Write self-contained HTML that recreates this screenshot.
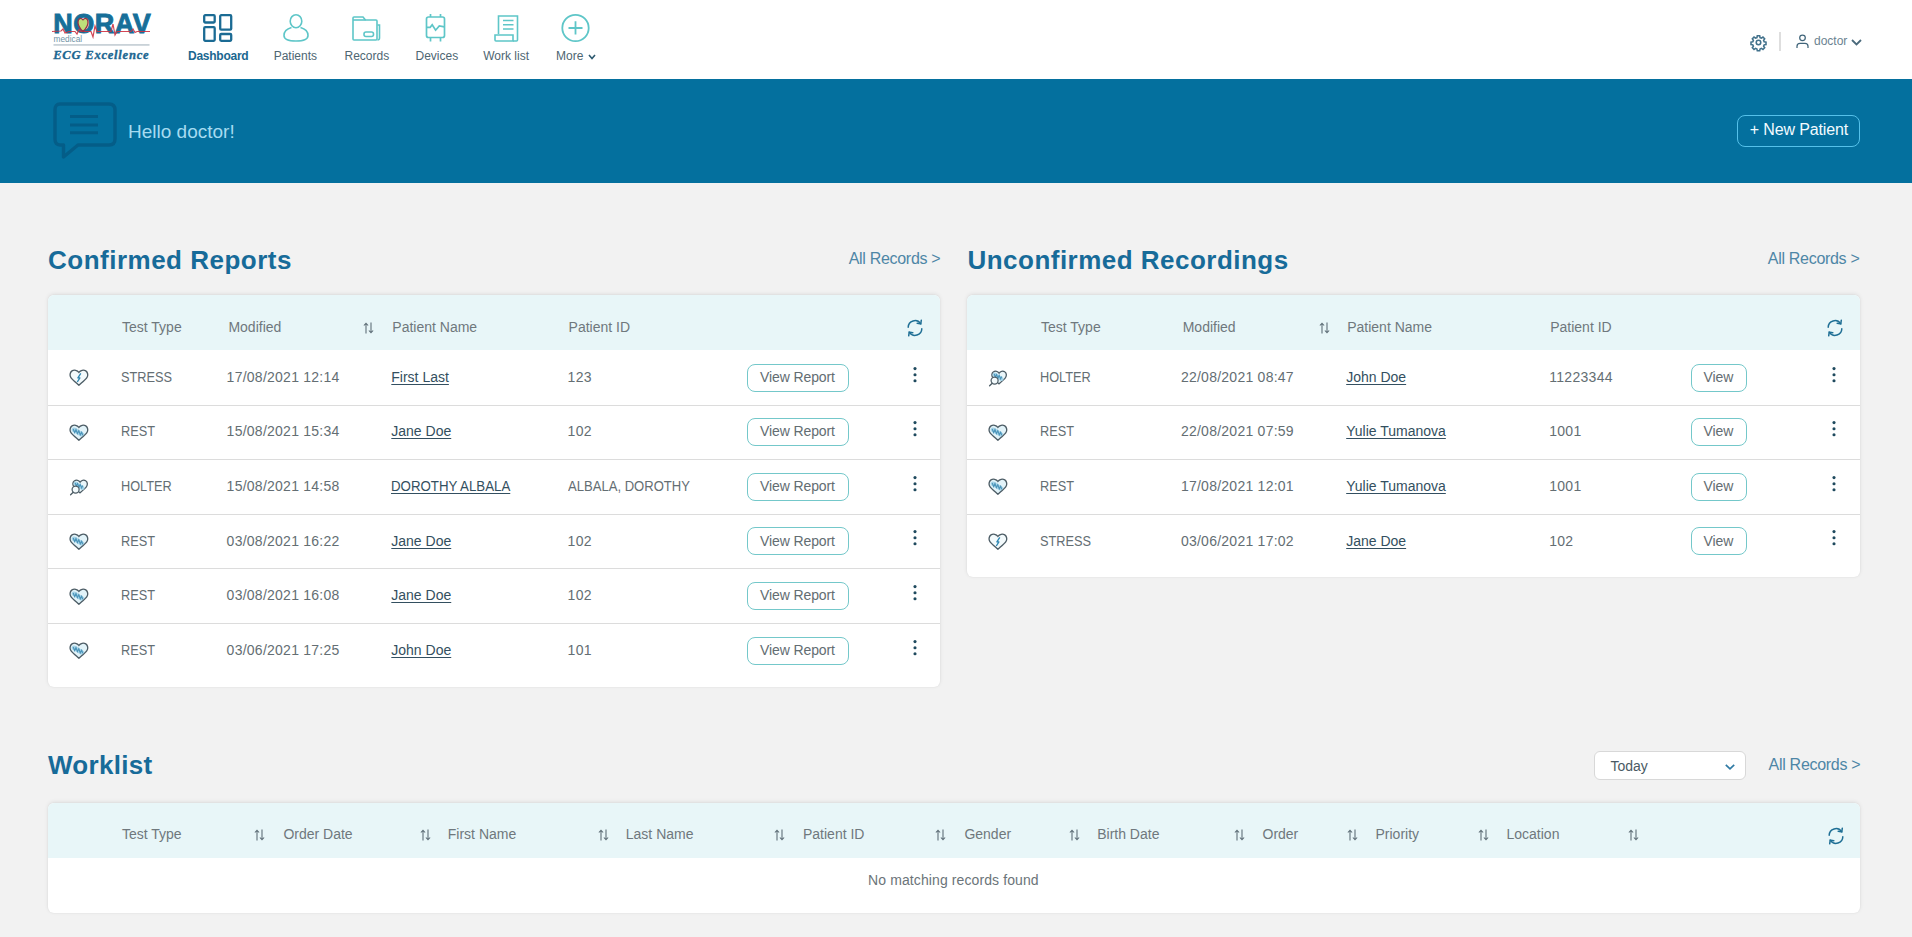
<!DOCTYPE html><html><head><meta charset="utf-8"><title>Dashboard</title><style>
*{margin:0;padding:0;box-sizing:border-box}
html,body{width:1912px;height:937px;overflow:hidden;background:#f2f2f2;font-family:'Liberation Sans',sans-serif}
.t{position:absolute;line-height:1;white-space:nowrap}
.a{position:absolute}
svg{position:absolute;overflow:visible}
.card{position:absolute;background:#fff;border-radius:6px;box-shadow:0 -1px 4px rgba(0,0,0,0.09),0 0 2px rgba(0,0,0,0.06);overflow:hidden}
.thead{position:absolute;left:0;top:0;right:0;height:55px;background:#e8f6f8}
.rowb{position:absolute;left:0;right:0;height:1px;background:#dcdcdc}
.btn{position:absolute;border:1px solid #74c8ca;border-radius:8px;height:28px;background:#fff}
.lnk{text-decoration:underline;text-underline-offset:2px}
</style></head><body>
<svg width="0" height="0" style="position:absolute;left:0;top:0"><defs><clipPath id="hc"><path d="M9.9 15.2 C7.5 13 4.2 10.3 2.8 8.3 C1.6 6.5 1.8 3.9 3.6 2.7 C5.5 1.5 8.3 2.2 9.9 4.4 C11.5 2.2 14.3 1.5 16.2 2.7 C18 3.9 18.2 6.5 17 8.3 C15.6 10.3 12.3 13 9.9 15.2 Z"/></clipPath></defs></svg>
<div class="a" style="left:0;top:0;width:1912px;height:79px;background:#fff"></div>
<div class="a" style="left:0;top:79px;width:1912px;height:104px;background:#04709e"></div>
<svg style="left:52px;top:10px" width="102" height="54" viewBox="0 0 102 54">
<text x="1.2" y="23.4" font-family="Liberation Sans" font-weight="bold" font-size="27" fill="#176f99" stroke="#176f99" stroke-width="0.9" letter-spacing="0.5">NORAV</text>
<polyline points="0,21.5 9,21 11,19 13,23 17,21.5 23,21.5 25,24 27,19.5 29,21.5 39,21.5 41,27 43,16 45,21.5 59,21.5 61,14 63,25 65,21.5 79,21.5 81,19 83,22.5 85,21.5 98,21.5" fill="none" stroke="#cc3344" stroke-width="1.2" opacity="0.9"/>
<path d="M31 21.5 C28.3 19 25.8 16 26 12 C26.2 8.5 28.6 7.3 31 9.8 C33.4 7.3 35.8 8.5 36 12 C36.2 16 33.7 19 31 21.5Z" fill="#bde07a" stroke="#9a3046" stroke-width="1.3"/>
<text x="1.5" y="32" font-family="Liberation Sans" font-size="8.3" fill="#6f93a6">medical</text>
<rect x="1.5" y="34" width="96" height="1.8" fill="#c9d2d8"/>
<text x="1.2" y="48.7" font-family="Liberation Serif" font-style="italic" font-weight="bold" font-size="12.6" fill="#1d6791" stroke="#1d6791" stroke-width="0.35" letter-spacing="0.75">ECG Excellence</text>
</svg>
<svg style="left:203px;top:14px" width="30" height="28" viewBox="0 0 30 28"><g fill="none" stroke="#1b6b94" stroke-width="2.3">
<rect x="1.2" y="1.2" width="10.5" height="7.3" rx="1"/><rect x="17.2" y="1.2" width="11" height="14.5" rx="1"/>
<rect x="1.2" y="13.2" width="10.5" height="13.6" rx="1"/><rect x="17.2" y="20" width="11" height="6.8" rx="1"/></g></svg>
<div class="t " style="left:188px;top:49.60px;font-size:12px;color:#1b6790;font-weight:bold;letter-spacing:-0.25px">Dashboard</div>
<svg style="left:283px;top:14px" width="26" height="28" viewBox="0 0 26 28"><g fill="none" stroke="#5ec6c8" stroke-width="1.6">
<ellipse cx="13" cy="7.2" rx="5.8" ry="6.5"/><path d="M8.5 13.5 C3 15 1 18 1 21.5 C1 25.5 6 27 13 27 C20 27 25 25.5 25 21.5 C25 18 23 15 17.5 13.5"/></g></svg>
<div class="t " style="left:273.7px;top:49.60px;font-size:12px;color:#4e6672;font-weight:normal;">Patients</div>
<svg style="left:352px;top:16px" width="29" height="25" viewBox="0 0 29 25"><g fill="none" stroke="#5ec6c8" stroke-width="1.6">
<path d="M1 23 V2 Q1 1 2 1 H11 L13.5 4 H24 Q25 4 25 5 V23 Q25 24 24 24 H2 Q1 24 1 23Z"/><path d="M1 4 H13.5"/><path d="M25.5 9 H27.5 V22 Q27.5 24 25.5 24"/>
<rect x="12" y="16" width="9.5" height="4.5" rx="2"/></g></svg>
<div class="t " style="left:344.5px;top:49.60px;font-size:12px;color:#4e6672;font-weight:normal;">Records</div>
<svg style="left:425px;top:14px" width="21" height="28" viewBox="0 0 21 28"><g fill="none" stroke="#5ec6c8" stroke-width="1.7">
<rect x="1.5" y="3" width="18" height="20.5" rx="2"/><path d="M5.5 0 V3 M15.5 0 V3 M5.5 23.5 V27.5 M15.5 23.5 V27.5"/>
<path d="M1.5 13.3 L5.2 13.3 L7.2 10.8 L10.6 16.2 L14.3 12 L19.5 12.8"/></g></svg>
<div class="t " style="left:415.5px;top:49.60px;font-size:12px;color:#4e6672;font-weight:normal;">Devices</div>
<svg style="left:494px;top:15px" width="26" height="27" viewBox="0 0 26 27"><g fill="none" stroke="#5ec6c8" stroke-width="1.6">
<path d="M4.5 19 V1 H23.5 V25"/><path d="M9 5.5 H19.5 M9 9.8 H19.5 M9 14 H19.5" stroke-width="1.4"/>
<path d="M1 20 H19 V26 H2 Q1 26 1 25Z"/><path d="M19 26 H22.5 Q23.5 26 23.5 25"/></g></svg>
<div class="t " style="left:483.2px;top:49.60px;font-size:12px;color:#4e6672;font-weight:normal;">Work list</div>
<svg style="left:561px;top:14px" width="30" height="28" viewBox="0 0 30 28"><g fill="none" stroke="#5ec6c8" stroke-width="1.8">
<circle cx="14.5" cy="14" r="13.2"/><path d="M14.5 7.2 V20.6 M7.5 14 H21.5"/></g></svg>
<div class="t " style="left:556px;top:49.60px;font-size:12px;color:#4e6672;font-weight:normal;">More</div>
<svg style="left:588px;top:54px" width="8" height="6" viewBox="0 0 8 6"><path d="M1 1 L4 4.5 L7 1" fill="none" stroke="#2e5a70" stroke-width="1.6"/></svg>
<svg style="left:1749.5px;top:33.5px" width="17" height="17" viewBox="0 0 24 24"><g fill="none" stroke="#41718b" stroke-width="2.2">
<circle cx="12" cy="12" r="3.2"/>
<path d="M10.3 2.5h3.4l.5 2.6 1.9.8 2.2-1.5 2.4 2.4-1.5 2.2.8 1.9 2.6.5v3.4l-2.6.5-.8 1.9 1.5 2.2-2.4 2.4-2.2-1.5-1.9.8-.5 2.6h-3.4l-.5-2.6-1.9-.8-2.2 1.5-2.4-2.4 1.5-2.2-.8-1.9-2.6-.5v-3.4l2.6-.5.8-1.9-1.5-2.2 2.4-2.4 2.2 1.5 1.9-.8z"/></g></svg>
<div class="a" style="left:1779px;top:32px;width:2px;height:19px;background:#dedede"></div>
<svg style="left:1795.5px;top:34px" width="14" height="14" viewBox="0 0 14 14"><g fill="none" stroke="#41657a" stroke-width="1.25">
<circle cx="6.5" cy="3.8" r="2.8"/><path d="M1 14 V12.2 Q1 9.3 4 9.3 H9 Q12 9.3 12 12.2 V14"/></g></svg>
<div class="t " style="left:1814px;top:35.20px;font-size:12px;color:#6b8391;font-weight:normal;">doctor</div>
<svg style="left:1851px;top:39px" width="11" height="7" viewBox="0 0 11 7"><path d="M1 1 L5.5 5.5 L10 1" fill="none" stroke="#4b6a7c" stroke-width="1.8"/></svg>
<svg style="left:53px;top:102px" width="64" height="58" viewBox="0 0 64 58"><g fill="none" stroke="#045d88" stroke-width="3.4" stroke-linejoin="round">
<path d="M7 2 H56 Q62 2 62 8 V37 Q62 43 56 43 H25 L10.5 55 L10.5 43 H7 Q2 43 2 37 V8 Q2 2 7 2Z"/>
<path d="M17 14.6 H45 M17 22.9 H45 M17 30.7 H45" stroke-width="3"/></g></svg>
<div class="t " style="left:128px;top:121.65px;font-size:19px;color:#a6dbf0;font-weight:normal;">Hello doctor!</div>
<div class="a" style="left:1737px;top:115px;width:123px;height:32px;border:1.3px solid #55c1ea;border-radius:8px"></div>
<div class="t " style="left:1749.7px;top:122.40px;font-size:16px;color:#f2fbff;font-weight:normal;letter-spacing:-0.12px">+ New Patient</div>
<div class="t " style="left:48px;top:246.70px;font-size:26px;color:#176b99;font-weight:bold;letter-spacing:0.5px">Confirmed Reports</div>
<div class="t " style="left:848.7px;top:250.80px;font-size:16px;color:#4e86a6;font-weight:normal;letter-spacing:-0.3px">All Records &gt;</div>
<div class="t " style="left:967.5px;top:246.70px;font-size:26px;color:#176b99;font-weight:bold;letter-spacing:0.48px">Unconfirmed Recordings</div>
<div class="t " style="left:1767.8px;top:250.80px;font-size:16px;color:#4e86a6;font-weight:normal;letter-spacing:-0.3px">All Records &gt;</div>
<div class="t " style="left:48px;top:751.90px;font-size:26px;color:#176b99;font-weight:bold;letter-spacing:0.3px">Worklist</div>
<div class="card" style="left:48px;top:295px;width:892px;height:391.6px"><div class="thead"></div>
<div class="rowb" style="top:109.6px"></div>
<div class="rowb" style="top:164.2px"></div>
<div class="rowb" style="top:218.8px"></div>
<div class="rowb" style="top:273.4px"></div>
<div class="rowb" style="top:328.0px"></div>
</div>
<div class="t " style="left:122px;top:319.60px;font-size:14px;color:#6f787d;font-weight:normal;">Test Type</div>
<div class="t " style="left:228.4px;top:319.60px;font-size:14px;color:#6f787d;font-weight:normal;">Modified</div>
<svg style="left:363px;top:322px" width="11" height="12" viewBox="0 0 11 12"><g fill="none" stroke="#5f6f78" stroke-width="1.1">
<path d="M3 11.5 V1.2 M0.9 3.5 L3 1.2 L5.1 3.5"/><path d="M8 0.5 V10.8 M5.9 8.5 L8 10.8 L10.1 8.5"/></g></svg>
<div class="t " style="left:392.3px;top:319.60px;font-size:14px;color:#6f787d;font-weight:normal;">Patient Name</div>
<div class="t " style="left:568.6px;top:319.60px;font-size:14px;color:#6f787d;font-weight:normal;">Patient ID</div>
<svg style="left:906px;top:319px" width="18" height="18" viewBox="0 0 18 18"><g fill="none" stroke="#1f6f95" stroke-width="1.5" stroke-linecap="round">
<path d="M2.2 8.3 A6.8 6.8 0 0 1 14.6 4.6"/><path d="M15.8 9.7 A6.8 6.8 0 0 1 3.4 13.4"/>
<path d="M15.3 1.2 L14.8 4.9 L11.2 4.3"/><path d="M2.7 16.8 L3.2 13.1 L6.8 13.7"/></g></svg>
<svg style="left:68.5px;top:369.2px" width="19" height="17" viewBox="0 0 19 17"><path d="M9.9 16.2 C7.5 14 3.5 10.8 1.9 8.6 C0.5 6.6 0.8 3.4 3 1.9 C5.2 0.5 8.3 1.2 9.9 3.4 C11.5 1.2 14.6 0.5 16.8 1.9 C19 3.4 19.3 6.6 17.9 8.6 C16.3 10.8 12.3 14 9.9 16.2 Z" fill="#f3fafc" stroke="#4d5d66" stroke-width="1.35"/><path d="M11.8 4.4 L8.9 8.9 L10.9 8.9 L8.3 13" fill="none" stroke="#2f87b2" stroke-width="1.35" stroke-linejoin="round"/></svg>
<div class="t " style="left:120.5px;top:369.70px;font-size:14px;color:#646e73;font-weight:normal;transform:scaleX(0.91);transform-origin:0 0">STRESS</div>
<div class="t " style="left:226.6px;top:369.70px;font-size:14px;color:#646e73;font-weight:normal;letter-spacing:0.25px">17/08/2021 12:14</div>
<div class="t lnk" style="left:391.3px;top:369.70px;font-size:14px;color:#334f60;font-weight:normal;">First Last</div>
<div class="t " style="left:567.6px;top:369.70px;font-size:14px;color:#646e73;font-weight:normal;letter-spacing:0.3px">123</div>
<div class="btn" style="left:747px;top:363.6px;width:102px"></div>
<div class="t " style="left:760px;top:369.70px;font-size:14px;color:#636d72;font-weight:normal;letter-spacing:-0.1px">View Report</div>
<svg style="left:913.4px;top:366.5px" width="4" height="15" viewBox="0 0 4 15"><g fill="#1f4a5e">
<circle cx="2" cy="1.6" r="1.55"/><circle cx="2" cy="7.7" r="1.55"/><circle cx="2" cy="13.8" r="1.55"/></g></svg>
<svg style="left:68.5px;top:423.8px" width="19" height="17" viewBox="0 0 19 17"><path d="M9.9 16.2 C7.5 14 3.5 10.8 1.9 8.6 C0.5 6.6 0.8 3.4 3 1.9 C5.2 0.5 8.3 1.2 9.9 3.4 C11.5 1.2 14.6 0.5 16.8 1.9 C19 3.4 19.3 6.6 17.9 8.6 C16.3 10.8 12.3 14 9.9 16.2 Z" fill="#e2f3f9" stroke="#4d5d66" stroke-width="1.35"/><g clip-path="url(#hc)"><path d="M5 5.8 L13.4 10.9" stroke="#a6d4e8" stroke-width="4.6" stroke-linecap="round"/><path d="M4.2 5 L5.6 8.6 L7 5.6 L8.4 9.6 L9.8 6.8 L11.3 10.8 L12.7 8.2 L13.8 11.4" fill="none" stroke="#4e96bb" stroke-width="1.15"/></g></svg>
<div class="t " style="left:120.5px;top:424.30px;font-size:14px;color:#646e73;font-weight:normal;transform:scaleX(0.91);transform-origin:0 0">REST</div>
<div class="t " style="left:226.6px;top:424.30px;font-size:14px;color:#646e73;font-weight:normal;letter-spacing:0.25px">15/08/2021 15:34</div>
<div class="t lnk" style="left:391.3px;top:424.30px;font-size:14px;color:#334f60;font-weight:normal;">Jane Doe</div>
<div class="t " style="left:567.6px;top:424.30px;font-size:14px;color:#646e73;font-weight:normal;letter-spacing:0.3px">102</div>
<div class="btn" style="left:747px;top:418.2px;width:102px"></div>
<div class="t " style="left:760px;top:424.30px;font-size:14px;color:#636d72;font-weight:normal;letter-spacing:-0.1px">View Report</div>
<svg style="left:913.4px;top:421.1px" width="4" height="15" viewBox="0 0 4 15"><g fill="#1f4a5e">
<circle cx="2" cy="1.6" r="1.55"/><circle cx="2" cy="7.7" r="1.55"/><circle cx="2" cy="13.8" r="1.55"/></g></svg>
<svg style="left:68.5px;top:478.4px" width="19" height="17" viewBox="0 0 19 17"><path d="M11 14.8 C9 13 5.8 10.4 4.6 8.5 C3.4 6.7 3.6 4 5.5 2.8 C7.3 1.6 9.8 2.3 11.1 4.1 C12.4 2.3 14.9 1.6 16.7 2.8 C18.6 4 18.8 6.7 17.6 8.5 C16.4 10.4 13.2 13 11 14.8 Z" fill="#eaf6fa" stroke="#4d5d66" stroke-width="1.3"/><path d="M6.5 5.5 L13.5 10" stroke="#a5d4e8" stroke-width="4" stroke-linecap="round"/><path d="M6.2 5 L7.4 8 L8.6 5.6 L9.9 9.2 L11.2 6.4 L12.6 10 L13.8 7.6" fill="none" stroke="#4a94ba" stroke-width="1.1"/><circle cx="6.6" cy="11.6" r="3.5" fill="#f4fbfd" stroke="#4d5d66" stroke-width="1.25"/><path d="M4.2 14.2 L1.6 16.8" stroke="#4d5d66" stroke-width="1.3" stroke-linecap="round"/></svg>
<div class="t " style="left:120.5px;top:478.90px;font-size:14px;color:#646e73;font-weight:normal;transform:scaleX(0.91);transform-origin:0 0">HOLTER</div>
<div class="t " style="left:226.6px;top:478.90px;font-size:14px;color:#646e73;font-weight:normal;letter-spacing:0.25px">15/08/2021 14:58</div>
<div class="t lnk" style="left:391.3px;top:478.90px;font-size:14px;color:#334f60;font-weight:normal;transform:scaleX(0.948);transform-origin:0 0">DOROTHY ALBALA</div>
<div class="t " style="left:567.6px;top:478.90px;font-size:14px;color:#646e73;font-weight:normal;transform:scaleX(0.933);transform-origin:0 0">ALBALA, DOROTHY</div>
<div class="btn" style="left:747px;top:472.8px;width:102px"></div>
<div class="t " style="left:760px;top:478.90px;font-size:14px;color:#636d72;font-weight:normal;letter-spacing:-0.1px">View Report</div>
<svg style="left:913.4px;top:475.7px" width="4" height="15" viewBox="0 0 4 15"><g fill="#1f4a5e">
<circle cx="2" cy="1.6" r="1.55"/><circle cx="2" cy="7.7" r="1.55"/><circle cx="2" cy="13.8" r="1.55"/></g></svg>
<svg style="left:68.5px;top:533.0px" width="19" height="17" viewBox="0 0 19 17"><path d="M9.9 16.2 C7.5 14 3.5 10.8 1.9 8.6 C0.5 6.6 0.8 3.4 3 1.9 C5.2 0.5 8.3 1.2 9.9 3.4 C11.5 1.2 14.6 0.5 16.8 1.9 C19 3.4 19.3 6.6 17.9 8.6 C16.3 10.8 12.3 14 9.9 16.2 Z" fill="#e2f3f9" stroke="#4d5d66" stroke-width="1.35"/><g clip-path="url(#hc)"><path d="M5 5.8 L13.4 10.9" stroke="#a6d4e8" stroke-width="4.6" stroke-linecap="round"/><path d="M4.2 5 L5.6 8.6 L7 5.6 L8.4 9.6 L9.8 6.8 L11.3 10.8 L12.7 8.2 L13.8 11.4" fill="none" stroke="#4e96bb" stroke-width="1.15"/></g></svg>
<div class="t " style="left:120.5px;top:533.50px;font-size:14px;color:#646e73;font-weight:normal;transform:scaleX(0.91);transform-origin:0 0">REST</div>
<div class="t " style="left:226.6px;top:533.50px;font-size:14px;color:#646e73;font-weight:normal;letter-spacing:0.25px">03/08/2021 16:22</div>
<div class="t lnk" style="left:391.3px;top:533.50px;font-size:14px;color:#334f60;font-weight:normal;">Jane Doe</div>
<div class="t " style="left:567.6px;top:533.50px;font-size:14px;color:#646e73;font-weight:normal;letter-spacing:0.3px">102</div>
<div class="btn" style="left:747px;top:527.4px;width:102px"></div>
<div class="t " style="left:760px;top:533.50px;font-size:14px;color:#636d72;font-weight:normal;letter-spacing:-0.1px">View Report</div>
<svg style="left:913.4px;top:530.3px" width="4" height="15" viewBox="0 0 4 15"><g fill="#1f4a5e">
<circle cx="2" cy="1.6" r="1.55"/><circle cx="2" cy="7.7" r="1.55"/><circle cx="2" cy="13.8" r="1.55"/></g></svg>
<svg style="left:68.5px;top:587.6px" width="19" height="17" viewBox="0 0 19 17"><path d="M9.9 16.2 C7.5 14 3.5 10.8 1.9 8.6 C0.5 6.6 0.8 3.4 3 1.9 C5.2 0.5 8.3 1.2 9.9 3.4 C11.5 1.2 14.6 0.5 16.8 1.9 C19 3.4 19.3 6.6 17.9 8.6 C16.3 10.8 12.3 14 9.9 16.2 Z" fill="#e2f3f9" stroke="#4d5d66" stroke-width="1.35"/><g clip-path="url(#hc)"><path d="M5 5.8 L13.4 10.9" stroke="#a6d4e8" stroke-width="4.6" stroke-linecap="round"/><path d="M4.2 5 L5.6 8.6 L7 5.6 L8.4 9.6 L9.8 6.8 L11.3 10.8 L12.7 8.2 L13.8 11.4" fill="none" stroke="#4e96bb" stroke-width="1.15"/></g></svg>
<div class="t " style="left:120.5px;top:588.10px;font-size:14px;color:#646e73;font-weight:normal;transform:scaleX(0.91);transform-origin:0 0">REST</div>
<div class="t " style="left:226.6px;top:588.10px;font-size:14px;color:#646e73;font-weight:normal;letter-spacing:0.25px">03/08/2021 16:08</div>
<div class="t lnk" style="left:391.3px;top:588.10px;font-size:14px;color:#334f60;font-weight:normal;">Jane Doe</div>
<div class="t " style="left:567.6px;top:588.10px;font-size:14px;color:#646e73;font-weight:normal;letter-spacing:0.3px">102</div>
<div class="btn" style="left:747px;top:582.0px;width:102px"></div>
<div class="t " style="left:760px;top:588.10px;font-size:14px;color:#636d72;font-weight:normal;letter-spacing:-0.1px">View Report</div>
<svg style="left:913.4px;top:584.9px" width="4" height="15" viewBox="0 0 4 15"><g fill="#1f4a5e">
<circle cx="2" cy="1.6" r="1.55"/><circle cx="2" cy="7.7" r="1.55"/><circle cx="2" cy="13.8" r="1.55"/></g></svg>
<svg style="left:68.5px;top:642.2px" width="19" height="17" viewBox="0 0 19 17"><path d="M9.9 16.2 C7.5 14 3.5 10.8 1.9 8.6 C0.5 6.6 0.8 3.4 3 1.9 C5.2 0.5 8.3 1.2 9.9 3.4 C11.5 1.2 14.6 0.5 16.8 1.9 C19 3.4 19.3 6.6 17.9 8.6 C16.3 10.8 12.3 14 9.9 16.2 Z" fill="#e2f3f9" stroke="#4d5d66" stroke-width="1.35"/><g clip-path="url(#hc)"><path d="M5 5.8 L13.4 10.9" stroke="#a6d4e8" stroke-width="4.6" stroke-linecap="round"/><path d="M4.2 5 L5.6 8.6 L7 5.6 L8.4 9.6 L9.8 6.8 L11.3 10.8 L12.7 8.2 L13.8 11.4" fill="none" stroke="#4e96bb" stroke-width="1.15"/></g></svg>
<div class="t " style="left:120.5px;top:642.70px;font-size:14px;color:#646e73;font-weight:normal;transform:scaleX(0.91);transform-origin:0 0">REST</div>
<div class="t " style="left:226.6px;top:642.70px;font-size:14px;color:#646e73;font-weight:normal;letter-spacing:0.25px">03/06/2021 17:25</div>
<div class="t lnk" style="left:391.3px;top:642.70px;font-size:14px;color:#334f60;font-weight:normal;">John Doe</div>
<div class="t " style="left:567.6px;top:642.70px;font-size:14px;color:#646e73;font-weight:normal;letter-spacing:0.3px">101</div>
<div class="btn" style="left:747px;top:636.6px;width:102px"></div>
<div class="t " style="left:760px;top:642.70px;font-size:14px;color:#636d72;font-weight:normal;letter-spacing:-0.1px">View Report</div>
<svg style="left:913.4px;top:639.5px" width="4" height="15" viewBox="0 0 4 15"><g fill="#1f4a5e">
<circle cx="2" cy="1.6" r="1.55"/><circle cx="2" cy="7.7" r="1.55"/><circle cx="2" cy="13.8" r="1.55"/></g></svg>
<div class="card" style="left:967px;top:295px;width:893px;height:282.4px"><div class="thead"></div>
<div class="rowb" style="top:109.6px"></div>
<div class="rowb" style="top:164.2px"></div>
<div class="rowb" style="top:218.8px"></div>
</div>
<div class="t " style="left:1041px;top:319.60px;font-size:14px;color:#6f787d;font-weight:normal;">Test Type</div>
<div class="t " style="left:1182.7px;top:319.60px;font-size:14px;color:#6f787d;font-weight:normal;">Modified</div>
<svg style="left:1319px;top:322px" width="11" height="12" viewBox="0 0 11 12"><g fill="none" stroke="#5f6f78" stroke-width="1.1">
<path d="M3 11.5 V1.2 M0.9 3.5 L3 1.2 L5.1 3.5"/><path d="M8 0.5 V10.8 M5.9 8.5 L8 10.8 L10.1 8.5"/></g></svg>
<div class="t " style="left:1347.2px;top:319.60px;font-size:14px;color:#6f787d;font-weight:normal;">Patient Name</div>
<div class="t " style="left:1550.2px;top:319.60px;font-size:14px;color:#6f787d;font-weight:normal;">Patient ID</div>
<svg style="left:1826px;top:319px" width="18" height="18" viewBox="0 0 18 18"><g fill="none" stroke="#1f6f95" stroke-width="1.5" stroke-linecap="round">
<path d="M2.2 8.3 A6.8 6.8 0 0 1 14.6 4.6"/><path d="M15.8 9.7 A6.8 6.8 0 0 1 3.4 13.4"/>
<path d="M15.3 1.2 L14.8 4.9 L11.2 4.3"/><path d="M2.7 16.8 L3.2 13.1 L6.8 13.7"/></g></svg>
<svg style="left:987.5px;top:369.2px" width="19" height="17" viewBox="0 0 19 17"><path d="M11 14.8 C9 13 5.8 10.4 4.6 8.5 C3.4 6.7 3.6 4 5.5 2.8 C7.3 1.6 9.8 2.3 11.1 4.1 C12.4 2.3 14.9 1.6 16.7 2.8 C18.6 4 18.8 6.7 17.6 8.5 C16.4 10.4 13.2 13 11 14.8 Z" fill="#eaf6fa" stroke="#4d5d66" stroke-width="1.3"/><path d="M6.5 5.5 L13.5 10" stroke="#a5d4e8" stroke-width="4" stroke-linecap="round"/><path d="M6.2 5 L7.4 8 L8.6 5.6 L9.9 9.2 L11.2 6.4 L12.6 10 L13.8 7.6" fill="none" stroke="#4a94ba" stroke-width="1.1"/><circle cx="6.6" cy="11.6" r="3.5" fill="#f4fbfd" stroke="#4d5d66" stroke-width="1.25"/><path d="M4.2 14.2 L1.6 16.8" stroke="#4d5d66" stroke-width="1.3" stroke-linecap="round"/></svg>
<div class="t " style="left:1039.5px;top:369.70px;font-size:14px;color:#646e73;font-weight:normal;transform:scaleX(0.91);transform-origin:0 0">HOLTER</div>
<div class="t " style="left:1180.9px;top:369.70px;font-size:14px;color:#646e73;font-weight:normal;letter-spacing:0.25px">22/08/2021 08:47</div>
<div class="t lnk" style="left:1346.2px;top:369.70px;font-size:14px;color:#334f60;font-weight:normal;">John Doe</div>
<div class="t " style="left:1549.2px;top:369.70px;font-size:14px;color:#646e73;font-weight:normal;letter-spacing:0.3px">11223344</div>
<div class="btn" style="left:1691px;top:363.6px;width:56px"></div>
<div class="t " style="left:1703.5px;top:369.70px;font-size:14px;color:#636d72;font-weight:normal;letter-spacing:-0.1px">View</div>
<svg style="left:1832.3px;top:366.5px" width="4" height="15" viewBox="0 0 4 15"><g fill="#1f4a5e">
<circle cx="2" cy="1.6" r="1.55"/><circle cx="2" cy="7.7" r="1.55"/><circle cx="2" cy="13.8" r="1.55"/></g></svg>
<svg style="left:987.5px;top:423.8px" width="19" height="17" viewBox="0 0 19 17"><path d="M9.9 16.2 C7.5 14 3.5 10.8 1.9 8.6 C0.5 6.6 0.8 3.4 3 1.9 C5.2 0.5 8.3 1.2 9.9 3.4 C11.5 1.2 14.6 0.5 16.8 1.9 C19 3.4 19.3 6.6 17.9 8.6 C16.3 10.8 12.3 14 9.9 16.2 Z" fill="#e2f3f9" stroke="#4d5d66" stroke-width="1.35"/><g clip-path="url(#hc)"><path d="M5 5.8 L13.4 10.9" stroke="#a6d4e8" stroke-width="4.6" stroke-linecap="round"/><path d="M4.2 5 L5.6 8.6 L7 5.6 L8.4 9.6 L9.8 6.8 L11.3 10.8 L12.7 8.2 L13.8 11.4" fill="none" stroke="#4e96bb" stroke-width="1.15"/></g></svg>
<div class="t " style="left:1039.5px;top:424.30px;font-size:14px;color:#646e73;font-weight:normal;transform:scaleX(0.91);transform-origin:0 0">REST</div>
<div class="t " style="left:1180.9px;top:424.30px;font-size:14px;color:#646e73;font-weight:normal;letter-spacing:0.25px">22/08/2021 07:59</div>
<div class="t lnk" style="left:1346.2px;top:424.30px;font-size:14px;color:#334f60;font-weight:normal;">Yulie Tumanova</div>
<div class="t " style="left:1549.2px;top:424.30px;font-size:14px;color:#646e73;font-weight:normal;letter-spacing:0.3px">1001</div>
<div class="btn" style="left:1691px;top:418.2px;width:56px"></div>
<div class="t " style="left:1703.5px;top:424.30px;font-size:14px;color:#636d72;font-weight:normal;letter-spacing:-0.1px">View</div>
<svg style="left:1832.3px;top:421.1px" width="4" height="15" viewBox="0 0 4 15"><g fill="#1f4a5e">
<circle cx="2" cy="1.6" r="1.55"/><circle cx="2" cy="7.7" r="1.55"/><circle cx="2" cy="13.8" r="1.55"/></g></svg>
<svg style="left:987.5px;top:478.4px" width="19" height="17" viewBox="0 0 19 17"><path d="M9.9 16.2 C7.5 14 3.5 10.8 1.9 8.6 C0.5 6.6 0.8 3.4 3 1.9 C5.2 0.5 8.3 1.2 9.9 3.4 C11.5 1.2 14.6 0.5 16.8 1.9 C19 3.4 19.3 6.6 17.9 8.6 C16.3 10.8 12.3 14 9.9 16.2 Z" fill="#e2f3f9" stroke="#4d5d66" stroke-width="1.35"/><g clip-path="url(#hc)"><path d="M5 5.8 L13.4 10.9" stroke="#a6d4e8" stroke-width="4.6" stroke-linecap="round"/><path d="M4.2 5 L5.6 8.6 L7 5.6 L8.4 9.6 L9.8 6.8 L11.3 10.8 L12.7 8.2 L13.8 11.4" fill="none" stroke="#4e96bb" stroke-width="1.15"/></g></svg>
<div class="t " style="left:1039.5px;top:478.90px;font-size:14px;color:#646e73;font-weight:normal;transform:scaleX(0.91);transform-origin:0 0">REST</div>
<div class="t " style="left:1180.9px;top:478.90px;font-size:14px;color:#646e73;font-weight:normal;letter-spacing:0.25px">17/08/2021 12:01</div>
<div class="t lnk" style="left:1346.2px;top:478.90px;font-size:14px;color:#334f60;font-weight:normal;">Yulie Tumanova</div>
<div class="t " style="left:1549.2px;top:478.90px;font-size:14px;color:#646e73;font-weight:normal;letter-spacing:0.3px">1001</div>
<div class="btn" style="left:1691px;top:472.8px;width:56px"></div>
<div class="t " style="left:1703.5px;top:478.90px;font-size:14px;color:#636d72;font-weight:normal;letter-spacing:-0.1px">View</div>
<svg style="left:1832.3px;top:475.7px" width="4" height="15" viewBox="0 0 4 15"><g fill="#1f4a5e">
<circle cx="2" cy="1.6" r="1.55"/><circle cx="2" cy="7.7" r="1.55"/><circle cx="2" cy="13.8" r="1.55"/></g></svg>
<svg style="left:987.5px;top:533.0px" width="19" height="17" viewBox="0 0 19 17"><path d="M9.9 16.2 C7.5 14 3.5 10.8 1.9 8.6 C0.5 6.6 0.8 3.4 3 1.9 C5.2 0.5 8.3 1.2 9.9 3.4 C11.5 1.2 14.6 0.5 16.8 1.9 C19 3.4 19.3 6.6 17.9 8.6 C16.3 10.8 12.3 14 9.9 16.2 Z" fill="#f3fafc" stroke="#4d5d66" stroke-width="1.35"/><path d="M11.8 4.4 L8.9 8.9 L10.9 8.9 L8.3 13" fill="none" stroke="#2f87b2" stroke-width="1.35" stroke-linejoin="round"/></svg>
<div class="t " style="left:1039.5px;top:533.50px;font-size:14px;color:#646e73;font-weight:normal;transform:scaleX(0.91);transform-origin:0 0">STRESS</div>
<div class="t " style="left:1180.9px;top:533.50px;font-size:14px;color:#646e73;font-weight:normal;letter-spacing:0.25px">03/06/2021 17:02</div>
<div class="t lnk" style="left:1346.2px;top:533.50px;font-size:14px;color:#334f60;font-weight:normal;">Jane Doe</div>
<div class="t " style="left:1549.2px;top:533.50px;font-size:14px;color:#646e73;font-weight:normal;letter-spacing:0.3px">102</div>
<div class="btn" style="left:1691px;top:527.4px;width:56px"></div>
<div class="t " style="left:1703.5px;top:533.50px;font-size:14px;color:#636d72;font-weight:normal;letter-spacing:-0.1px">View</div>
<svg style="left:1832.3px;top:530.3px" width="4" height="15" viewBox="0 0 4 15"><g fill="#1f4a5e">
<circle cx="2" cy="1.6" r="1.55"/><circle cx="2" cy="7.7" r="1.55"/><circle cx="2" cy="13.8" r="1.55"/></g></svg>
<div class="card" style="left:48px;top:803px;width:1812px;height:109.5px"><div class="thead" style="height:54.5px"></div></div>
<div class="t " style="left:121.9px;top:827.30px;font-size:14px;color:#6f787d;font-weight:normal;">Test Type</div>
<svg style="left:253.6px;top:829px" width="11" height="12" viewBox="0 0 11 12"><g fill="none" stroke="#5f6f78" stroke-width="1.1">
<path d="M3 11.5 V1.2 M0.9 3.5 L3 1.2 L5.1 3.5"/><path d="M8 0.5 V10.8 M5.9 8.5 L8 10.8 L10.1 8.5"/></g></svg>
<div class="t " style="left:283.4px;top:827.30px;font-size:14px;color:#6f787d;font-weight:normal;">Order Date</div>
<svg style="left:419.6px;top:829px" width="11" height="12" viewBox="0 0 11 12"><g fill="none" stroke="#5f6f78" stroke-width="1.1">
<path d="M3 11.5 V1.2 M0.9 3.5 L3 1.2 L5.1 3.5"/><path d="M8 0.5 V10.8 M5.9 8.5 L8 10.8 L10.1 8.5"/></g></svg>
<div class="t " style="left:447.8px;top:827.30px;font-size:14px;color:#6f787d;font-weight:normal;">First Name</div>
<svg style="left:597.9px;top:829px" width="11" height="12" viewBox="0 0 11 12"><g fill="none" stroke="#5f6f78" stroke-width="1.1">
<path d="M3 11.5 V1.2 M0.9 3.5 L3 1.2 L5.1 3.5"/><path d="M8 0.5 V10.8 M5.9 8.5 L8 10.8 L10.1 8.5"/></g></svg>
<div class="t " style="left:625.8px;top:827.30px;font-size:14px;color:#6f787d;font-weight:normal;">Last Name</div>
<svg style="left:773.8px;top:829px" width="11" height="12" viewBox="0 0 11 12"><g fill="none" stroke="#5f6f78" stroke-width="1.1">
<path d="M3 11.5 V1.2 M0.9 3.5 L3 1.2 L5.1 3.5"/><path d="M8 0.5 V10.8 M5.9 8.5 L8 10.8 L10.1 8.5"/></g></svg>
<div class="t " style="left:803px;top:827.30px;font-size:14px;color:#6f787d;font-weight:normal;">Patient ID</div>
<svg style="left:935px;top:829px" width="11" height="12" viewBox="0 0 11 12"><g fill="none" stroke="#5f6f78" stroke-width="1.1">
<path d="M3 11.5 V1.2 M0.9 3.5 L3 1.2 L5.1 3.5"/><path d="M8 0.5 V10.8 M5.9 8.5 L8 10.8 L10.1 8.5"/></g></svg>
<div class="t " style="left:964.4px;top:827.30px;font-size:14px;color:#6f787d;font-weight:normal;">Gender</div>
<svg style="left:1069px;top:829px" width="11" height="12" viewBox="0 0 11 12"><g fill="none" stroke="#5f6f78" stroke-width="1.1">
<path d="M3 11.5 V1.2 M0.9 3.5 L3 1.2 L5.1 3.5"/><path d="M8 0.5 V10.8 M5.9 8.5 L8 10.8 L10.1 8.5"/></g></svg>
<div class="t " style="left:1097.2px;top:827.30px;font-size:14px;color:#6f787d;font-weight:normal;">Birth Date</div>
<svg style="left:1234.3px;top:829px" width="11" height="12" viewBox="0 0 11 12"><g fill="none" stroke="#5f6f78" stroke-width="1.1">
<path d="M3 11.5 V1.2 M0.9 3.5 L3 1.2 L5.1 3.5"/><path d="M8 0.5 V10.8 M5.9 8.5 L8 10.8 L10.1 8.5"/></g></svg>
<div class="t " style="left:1262.5px;top:827.30px;font-size:14px;color:#6f787d;font-weight:normal;">Order</div>
<svg style="left:1346.5px;top:829px" width="11" height="12" viewBox="0 0 11 12"><g fill="none" stroke="#5f6f78" stroke-width="1.1">
<path d="M3 11.5 V1.2 M0.9 3.5 L3 1.2 L5.1 3.5"/><path d="M8 0.5 V10.8 M5.9 8.5 L8 10.8 L10.1 8.5"/></g></svg>
<div class="t " style="left:1375.5px;top:827.30px;font-size:14px;color:#6f787d;font-weight:normal;">Priority</div>
<svg style="left:1478px;top:829px" width="11" height="12" viewBox="0 0 11 12"><g fill="none" stroke="#5f6f78" stroke-width="1.1">
<path d="M3 11.5 V1.2 M0.9 3.5 L3 1.2 L5.1 3.5"/><path d="M8 0.5 V10.8 M5.9 8.5 L8 10.8 L10.1 8.5"/></g></svg>
<div class="t " style="left:1506.5px;top:827.30px;font-size:14px;color:#6f787d;font-weight:normal;">Location</div>
<svg style="left:1628px;top:829px" width="11" height="12" viewBox="0 0 11 12"><g fill="none" stroke="#5f6f78" stroke-width="1.1">
<path d="M3 11.5 V1.2 M0.9 3.5 L3 1.2 L5.1 3.5"/><path d="M8 0.5 V10.8 M5.9 8.5 L8 10.8 L10.1 8.5"/></g></svg>
<svg style="left:1827px;top:827px" width="18" height="18" viewBox="0 0 18 18"><g fill="none" stroke="#1f6f95" stroke-width="1.5" stroke-linecap="round">
<path d="M2.2 8.3 A6.8 6.8 0 0 1 14.6 4.6"/><path d="M15.8 9.7 A6.8 6.8 0 0 1 3.4 13.4"/>
<path d="M15.3 1.2 L14.8 4.9 L11.2 4.3"/><path d="M2.7 16.8 L3.2 13.1 L6.8 13.7"/></g></svg>
<div class="t " style="left:868.1px;top:872.80px;font-size:14px;color:#6b7479;font-weight:normal;letter-spacing:0.1px">No matching records found</div>
<div class="a" style="left:1593.5px;top:750.5px;width:152px;height:29px;background:#fff;border:1px solid #d8d8d8;border-radius:6px"></div>
<div class="t " style="left:1610.4px;top:758.50px;font-size:14px;color:#4a5a64;font-weight:normal;">Today</div>
<svg style="left:1724px;top:763px" width="12" height="8" viewBox="0 0 12 8"><path d="M1.8 1.8 L6 5.8 L10.2 1.8" fill="none" stroke="#2f7aa4" stroke-width="1.7"/></svg>
<div class="t " style="left:1768.6px;top:756.80px;font-size:16px;color:#4e86a6;font-weight:normal;letter-spacing:-0.3px">All Records &gt;</div>
</body></html>
